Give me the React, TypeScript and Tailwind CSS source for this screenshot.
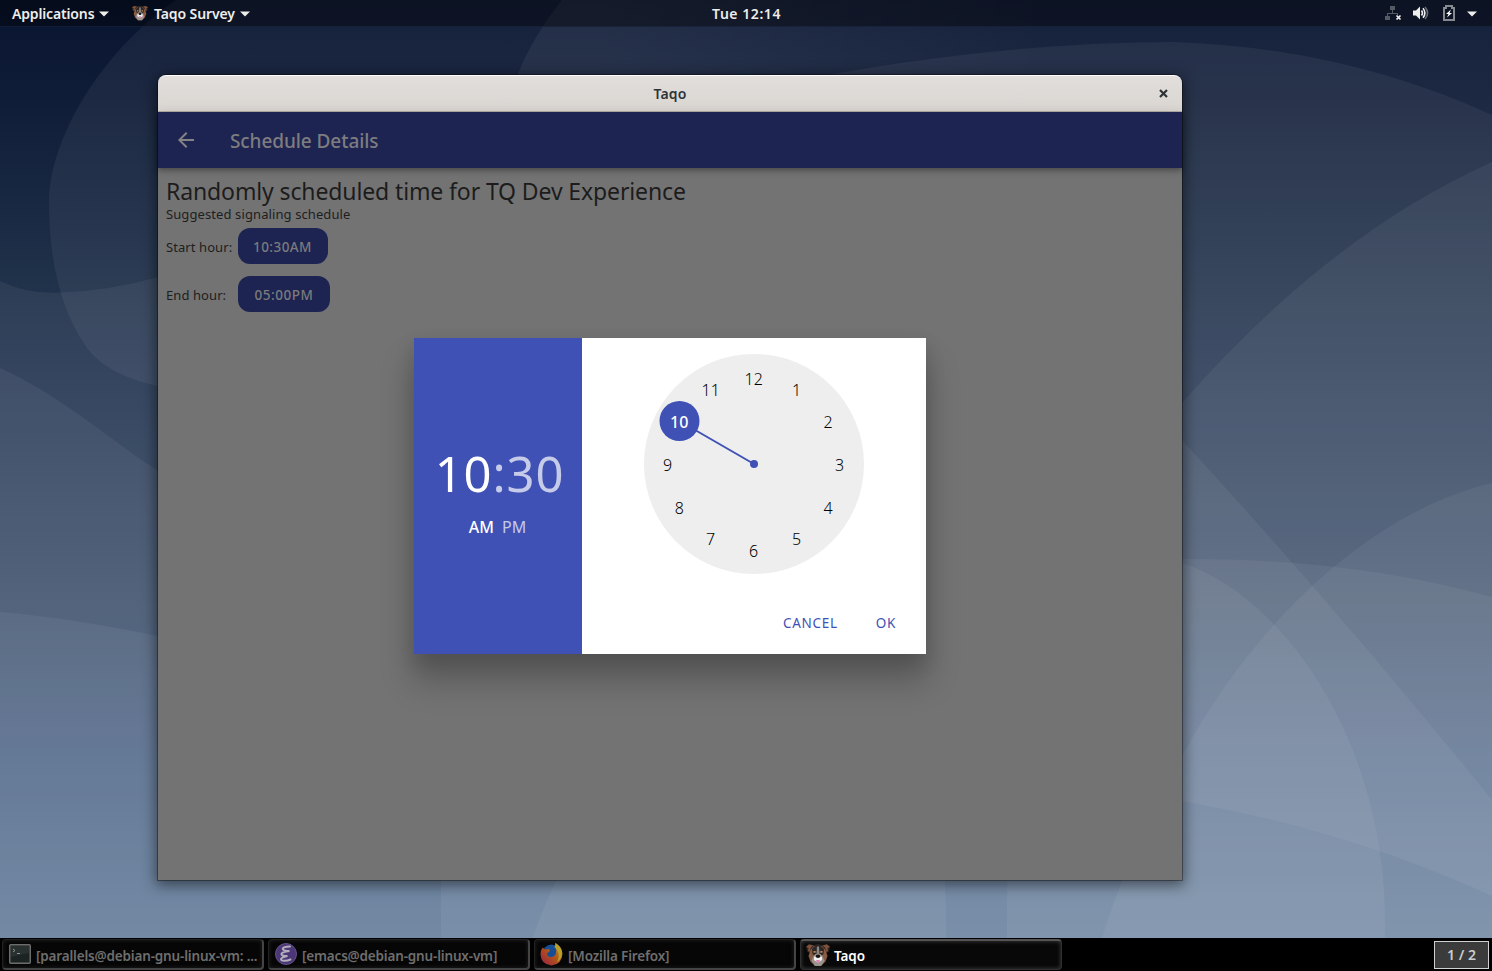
import React from "react";

function Wallpaper() {
  return (
    <svg className="absolute inset-0" width="1492" height="971" viewBox="0 0 1492 971" aria-hidden="true">
      <defs>
        <linearGradient id="sky" x1="0" y1="0" x2="0" y2="938" gradientUnits="userSpaceOnUse">
          <stop offset="0" stopColor="#081430" />
          <stop offset=".1" stopColor="#0f1c37" />
          <stop offset=".29" stopColor="#1f3049" />
          <stop offset=".38" stopColor="#283954" />
          <stop offset=".64" stopColor="#3e516c" />
          <stop offset=".8" stopColor="#4a6284" />
          <stop offset="1" stopColor="#5a7595" />
        </linearGradient>
        <linearGradient id="fade" x1="600" y1="0" x2="1050" y2="0" gradientUnits="userSpaceOnUse">
          <stop offset="0" stopColor="#fff" />
          <stop offset="1" stopColor="#fff" stopOpacity="0" />
        </linearGradient>
      </defs>
      <rect width="1492" height="971" fill="url(#sky)" />
      <g fill="#fff" fillOpacity=".053">
        <path d="M176 0C100 52 49 140 49 203C49 263 62 312 85 345C100 368 130 380 158 386C500 460 800 740 1182 801Q1348 830 1492 896V0Z" />
        <path d="M0 281Q24 293 55 293Q110 291 158 277C500 180 900 560 1182 403Q1329 235 1492 162V971H0Z" />
        <path d="M0 368C60 395 105 436 158 471C500 640 850 250 1182 440Q1340 612 1492 800V971H0Z" />
        <path d="M0 612Q65 617 158 636Q700 560 1182 559Q1350 558 1492 597V971H0Z" />
        <path d="M800 80Q1000 42 1175 42Q1345 48 1492 115V971H442Q436 800 460 700Q550 300 800 80Z" />
        <path d="M562 0Q532 38 518 74L518 120H1050V0Z" fill="url(#fade)" />
        <path d="M530 945Q620 680 900 600Q948 800 946 938V945Z" />
        <path d="M1007 938Q1004 700 1080 560Q1130 550 1182 563C1280 594 1390 740 1385 938Z" />
        <path d="M1102 938Q1125 860 1182 756C1265 604 1385 508 1492 483V938Z" />
      </g>
    </svg>
  );
}

function Dog({ size }: { size: number }) {
  return (
    <svg width={size} height={size} viewBox="0 0 24 24" aria-hidden="true" className="shrink-0">
      <path d="M0 3.500 3 1l5 1 4-1 4 1 5-1 3 2.500-1 5-3.500 2H4.500L1 8.500Z" fill="#2d2422" />
      <path d="M0 4 3 1.500 7.500 2.500 5 4.500 3.500 9 2 8 2.500 5ZM24 4l-3-2.500-4.500 1L19 4.500 20.500 9 22 8l-.500-3Z" fill="#80523a" />
      <path d="M4.500 7 8 3h8l3.500 4 2 6-2 5.500L15 23h-6l-4.500-4.500-2-5.500Z" fill="#8a5c42" />
      <path d="m6 6 3-3h6l3 3-.500 5L15 13H9l-2.500-2Z" fill="#2b2728" />
      <path d="m11 3 1 1 1-1 .5 8h-3Z" fill="#8d8784" />
      <path d="M7.500 13 5.500 18 9 23h6l3.500-5-2-5-2-2h-5Z" fill="#99928d" />
      <path d="M7.500 8h2.200v1.700H7.500zM14.300 8h2.200v1.700h-2.200z" fill="#c08552" />
      <path d="M8 14q4-4 8 0v3l-4 2.500L8 17Z" fill="#f0efef" />
      <ellipse cx="12" cy="13.300" rx="2.300" ry="1.800" fill="#151316" />
      <path d="M10 17h4l-1 2.500h-2Z" fill="#de83b8" />
    </svg>
  );
}

function Caret() {
  return (
    <svg width="10" height="6" viewBox="0 0 10 6" className="shrink-0">
      <path d="M0 .5h10L5 5.5Z" fill="#eeeeec" />
    </svg>
  );
}

function TopBar() {
  return (
    <header className="relative flex h-[27px] shrink-0 items-center border-b border-[#1b2a4a]/60 bg-black/40 text-[14px] leading-[20px] font-semibold text-[#eeeeec]">
      <div className="flex flex-1 items-center pr-[4px] pl-3">
        <span className="w-[82px] pt-[2px] tracking-[-0.15px] whitespace-nowrap">Applications</span>
        <span className="ml-[5px] flex pt-[1px]"><Caret /></span>
        <span className="ml-[23px] flex"><Dog size={16} /></span>
        <span className="ml-[6px] w-[82px] pt-[2px] tracking-[-0.1px] whitespace-nowrap">Taqo Survey</span>
        <span className="ml-[4px] flex pt-[1px]"><Caret /></span>
      </div>
      <span className="pt-[2px] tracking-[0.55px]">Tue 12:14</span>
      <div className="flex flex-1 items-center justify-end pr-[15px]">
        <svg width="17" height="16" viewBox="0 0 17 16">
          <path d="M5 1h5v4H5zM0 11h5v4H0zM7 5h1v3H7zM2 8h11v1H2zM2 8h1v3H2zM12 8h1v2h-1z" fill="#555b62" />
          <path d="m11.5 10.500 4 4m0-4-4 4" stroke="#eeeeec" strokeWidth="1.7" />
        </svg>
        <svg width="16" height="14" viewBox="0 0 16 14" className="ml-[11px]">
          <path d="M0 4.500h3L7 .500v13L3 9.500H0Z" fill="#eeeeec" />
          <path d="M8.500 4.500q2 2.500 0 5M10 2.300q3.800 4.700 0 9.400" fill="none" stroke="#eeeeec" strokeWidth="1.6" />
          <path d="M12 1q5.200 6 0 12" fill="none" stroke="#666c73" strokeWidth="1.6" />
        </svg>
        <svg width="12" height="16" viewBox="0 0 12 16" className="ml-[14px]">
          <path d="M1 3h2V1h6v2h2v12H1Z" fill="none" stroke="#858a90" strokeWidth="2" />
          <path d="M8 4.500 3 9h2.500L4 12.500 9 8H6.500Z" fill="#fff" />
        </svg>
        <span className="ml-[12px] flex pt-[1px]"><Caret /></span>
      </div>
    </header>
  );
}

const HOURS = [12, 1, 2, 3, 4, 5, 6, 7, 8, 9, 10, 11];

function Dial() {
  return (
    <div className="relative size-[220px] rounded-full bg-[#eeeeee]">
      <svg width="220" height="220" viewBox="0 0 220 220" className="absolute inset-0">
        <path d="M110 110 35.500 67" stroke="#3f51b5" strokeWidth="2" />
        <circle cx="110" cy="110" r="4" fill="#3f51b5" />
        <circle cx="35.500" cy="67" r="20" fill="#3f51b5" />
      </svg>
      {HOURS.map((h, i) => {
        const a = (i * Math.PI) / 6;
        return (
          <span
            key={h}
            className={
              h === 10
                ? "absolute -translate-x-1/2 -translate-y-1/2 text-[16px] leading-[20px] font-medium text-white"
                : "absolute -translate-x-1/2 -translate-y-1/2 text-[16px] leading-[20px] font-light text-black"
            }
            style={{ left: 110 + 86 * Math.sin(a) - 0.3, top: 110.6 - 86 * Math.cos(a) }}
          >
            {h}
          </span>
        );
      })}
    </div>
  );
}

function TimePicker() {
  return (
    <div className="flex h-[316px] w-[512px] bg-white shadow-[0_26px_30px_2px_rgba(0,0,0,0.22),0_8px_18px_1px_rgba(0,0,0,0.12)]">
      <div className="flex w-[168px] flex-col items-center bg-[#3f51b5] pt-[105px] text-white">
        <div className="ml-[3px] text-[49px] leading-[60px] tracking-[0.9px] whitespace-nowrap">
          <span className="font-[450]">10</span>
          <span className="text-white/70">:30</span>
        </div>
        <div className="mt-[14px] flex gap-[8px] pr-[1px] text-[16px] leading-[20px]">
          <span className="font-medium">AM</span>
          <span className="text-white/70">PM</span>
        </div>
      </div>
      <div className="flex flex-1 flex-col items-center pt-4">
        <Dial />
        <div className="mt-[39px] flex w-full justify-end gap-[38px] pr-[30px] text-[13.500px] leading-[20px] text-[#3f51b5]">
          <span className="tracking-[0.700px]">CANCEL</span>
          <span className="tracking-[0.700px]">OK</span>
        </div>
      </div>
    </div>
  );
}

function AppWindow() {
  return (
    <section className="flex h-[805px] w-[1024px] flex-col rounded-t-[8px] shadow-[0_0_0_1px_rgba(0,0,0,0.35),0_3px_14px_2px_rgba(0,0,0,0.5)]">
      <div className="flex h-[37px] shrink-0 items-center rounded-t-[8px] border-t border-b border-t-white border-b-[#b5aea6] bg-gradient-to-b from-[#e1dedb] to-[#dad6d2] text-[14px] font-semibold text-[#2e3436]">
        <span className="flex-1 pl-[14px]" />
        <span className="tracking-[0.200px]">Taqo</span>
        <span className="flex flex-1 justify-end pr-[14px]">
          <svg width="9" height="9" viewBox="0 0 9 9" className="-mt-[1px]">
            <path d="m1 1 7 7m0-7-7 7" stroke="#2e3436" strokeWidth="2.200" />
          </svg>
        </span>
      </div>
      <div className="relative flex flex-1 flex-col bg-[#737373]">
        <div className="z-[1] flex h-[56px] shrink-0 items-center bg-[#1d2451] pl-[20px] text-[#7d7d80] shadow-[0_2px_4px_-1px_rgba(0,0,0,0.2),0_4px_5px_0_rgba(0,0,0,0.14),0_1px_10px_0_rgba(0,0,0,0.12)]">
          <svg width="16" height="16" viewBox="4 4 16 16">
            <path d="M20 11H7.830l5.590-5.590L12 4l-8 8 8 8 1.410-1.410L7.830 13H20v-2z" fill="#838383" />
          </svg>
          <h1 className="mt-[2px] ml-[36px] text-[19px] leading-[28px] font-medium tracking-[-0.080px]">Schedule Details</h1>
        </div>
        <main className="flex flex-col items-start pt-[7px] pl-[8px] text-[13px] text-[#1e1e1e]">
          <h2 className="text-[23px] leading-[32px] font-normal tracking-[-0.120px] text-[#1c1c1c]">Randomly scheduled time for TQ Dev Experience</h2>
          <p className="-mt-[2px] leading-[18px] tracking-[0.100px]">Suggested signaling schedule</p>
          <div className="mt-[5px] flex h-[36px] items-center">
            <span className="w-[72px] pt-[3px] tracking-[0.080px]">Start hour:</span>
            <span className="flex h-[36px] w-[90px] items-center justify-center rounded-[12px] bg-[#1d2451] pt-[3px] pr-[1px] text-[13.500px] font-medium tracking-[0.450px] text-[#7b7b7d]">10:30AM</span>
          </div>
          <div className="mt-[12px] flex h-[36px] items-center">
            <span className="w-[72px] pt-[3px] tracking-[0.080px]">End hour:</span>
            <span className="flex h-[36px] w-[92px] items-center justify-center rounded-[12px] bg-[#1d2451] pt-[3px] text-[13.500px] font-medium tracking-[0.550px] text-[#7b7b7d]">05:00PM</span>
          </div>
        </main>
        <div className="absolute inset-0 z-[2] flex items-center justify-center">
          <TimePicker />
        </div>
      </div>
    </section>
  );
}

function TerminalIcon() {
  return (
    <svg width="22" height="20" viewBox="0 0 22 20">
      <rect x=".750" y=".750" width="20.500" height="18.500" rx="1" fill="#1c2323" stroke="#6c6c6b" strokeWidth="1.500" />
      <path d="M2 2h18v7L2 13Z" fill="#293030" />
      <path d="m4 5 2 1.500L4 8M8 9.500h3" fill="none" stroke="#8c9090" />
    </svg>
  );
}

function EmacsIcon() {
  return (
    <svg width="22" height="22" viewBox="0 0 22 22">
      <circle cx="11" cy="11" r="10.500" fill="#4b3676" stroke="#64548a" />
      <path d="M15 3.500C10 3.500 7 5 8 6.500S12 8 14.500 8C9 8.500 6 10 6.500 11.500S10 13 12.500 13C8 14 5.500 15 6 16.500S11 18.500 15.500 16.500" fill="none" stroke="#b2aebb" strokeWidth="2" strokeLinecap="round" />
    </svg>
  );
}

function FirefoxIcon() {
  return (
    <svg width="23" height="23" viewBox="0 0 23 23">
      <defs>
        <linearGradient id="fx" x1="1" y1="0" x2="0" y2="1">
          <stop offset="0" stopColor="#b6a42c" />
          <stop offset=".45" stopColor="#b25a17" />
          <stop offset="1" stopColor="#981c45" />
        </linearGradient>
      </defs>
      <circle cx="11.500" cy="10.500" r="9" fill="#164e96" />
      <path d="M2.500 4.500 5 6.500 9 6l1 2-3 2.500q.500 4 5 3.500 4-1 4-5Q17 6 14.500 4 15.500 3 15.500 0q6.500 4 7 10.500-.500 11-11 12Q1 21.500.500 11.500.700 7 2.500 4.500Z" fill="url(#fx)" />
      <path d="M15.500 0q7 5 6.500 11-1 6-5 8 3-6 1-10-1-3-3.500-5 1-1 1-4Z" fill="#b89f2b" />
    </svg>
  );
}

function Task({ icon, label, active }: { icon: React.ReactNode; label: string; active?: boolean }) {
  return (
    <div
      className={
        active
          ? "flex h-[31px] w-[262px] items-center rounded-[4px] border border-t-2 border-[#303030] border-t-[#545454] bg-[#080808] pl-[5px] text-white shadow-[inset_0_0_4px_#444]"
          : "flex h-[31px] w-[262px] items-center rounded-[4px] border border-r-2 border-b-2 border-[#222222] border-r-[#444444] border-b-[#444444] bg-[#060606] pl-[5px] text-[#6e6e6e] shadow-[inset_0_0_4px_#222]"
      }
    >
      <span className="flex w-[23px] shrink-0 justify-center">{icon}</span>
      <span
        className={
          active
            ? "ml-[5px] pt-[2px] text-[13.500px] leading-[20px] font-semibold tracking-[-0.100px] whitespace-nowrap"
            : "ml-[5px] pt-[3px] text-[13.500px] leading-[20px] font-semibold tracking-[-0.170px] whitespace-nowrap"
        }
      >
        {label}
      </span>
    </div>
  );
}

function Taskbar() {
  return (
    <footer className="relative flex h-[33px] shrink-0 items-center bg-black pr-[3px] pl-[2px]">
      <div className="flex flex-1 gap-[4px]">
        <Task icon={<TerminalIcon />} label="[parallels@debian-gnu-linux-vm: ..." />
        <Task icon={<EmacsIcon />} label="[emacs@debian-gnu-linux-vm]" />
        <Task icon={<FirefoxIcon />} label="[Mozilla Firefox]" />
        <Task icon={<Dog size={24} />} label="Taqo" active />
      </div>
      <div className="flex h-[28px] w-[55px] items-center justify-center border border-[#d0d0d0] bg-[#3b3b3b] text-[14px] font-semibold text-[#cccccc]">1 / 2</div>
    </footer>
  );
}

export default function App() {
  return (
    <div className='relative flex h-[971px] w-[1492px] flex-col overflow-hidden font-["Noto_Sans",sans-serif]'>
      <Wallpaper />
      <TopBar />
      <div className="relative flex flex-1 items-start pt-[48px] pl-[158px]">
        <AppWindow />
      </div>
      <Taskbar />
    </div>
  );
}
